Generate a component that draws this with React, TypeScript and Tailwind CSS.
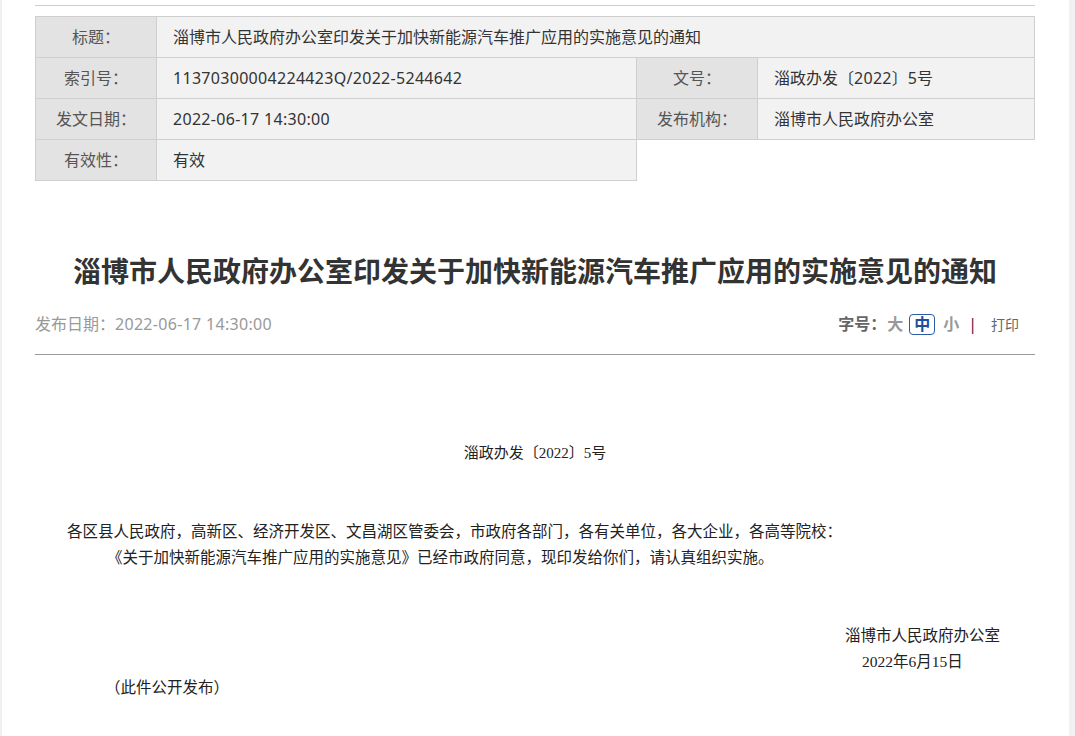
import React from 'react';

/* 淄博市政府信息公开 — 文件详情页 */

const SANS = '"Noto Sans", "Noto Sans CJK SC", sans-serif';
const SERIF = '"Liberation Serif", "Noto Sans CJK SC", serif';

const labelCls = 'h-[41px] border border-[#cfcfcf] bg-[#e3e3e3] text-center text-[16px] text-[#555] font-normal p-0';
const valueCls = 'h-[41px] border border-[#cfcfcf] bg-[#f2f2f2] text-left text-[16px] text-[#333] pl-4 p-0';

// digits in the original render a touch wider than Noto Sans
const Num = ({ children }: { children: React.ReactNode }) => (
  <span className="tracking-[0.3px]">{children}</span>
);

function MetaTable() {
  return (
    <table className="w-[1000px] table-fixed border-collapse">
      <colgroup>
        <col className="w-[121px]" />
        <col className="w-[480px]" />
        <col className="w-[121px]" />
        <col />
      </colgroup>
      <tbody>
        <tr>
          <th className={labelCls}>标题：</th>
          <td className={valueCls} colSpan={3}>淄博市人民政府办公室印发关于加快新能源汽车推广应用的实施意见的通知</td>
        </tr>
        <tr>
          <th className={labelCls}>索引号：</th>
          <td className={valueCls}><Num>11370300004224423Q/2022-5244642</Num></td>
          <th className={labelCls}>文号：</th>
          <td className={valueCls}>淄政办发〔<Num>2022</Num>〕5号</td>
        </tr>
        <tr>
          <th className={labelCls}>发文日期：</th>
          <td className={valueCls}><Num>2022-06-17 14:30:00</Num></td>
          <th className={labelCls}>发布机构：</th>
          <td className={valueCls}>淄博市人民政府办公室</td>
        </tr>
        <tr>
          <th className={labelCls}>有效性：</th>
          <td className={valueCls}>有效</td>
          <td colSpan={2} className="border-0 p-0" />
        </tr>
      </tbody>
    </table>
  );
}

function FontSizeBar() {
  return (
    <div className="flex items-center text-[16px] font-bold">
      <span className="text-[#666]">字号：</span>
      <span className="ml-[1px] text-[#999]">大</span>
      <span className="ml-[6px] flex h-[21px] w-[26px] items-center justify-center rounded-[4px] border border-[#2b5aa8] text-[#1d4f9c]">中</span>
      <span className="ml-[8px] text-[#999]">小</span>
      <span className="ml-[9px] text-[#5e1742] font-normal">|</span>
      <span className="ml-[14px] mr-[16px] text-[14px] font-normal text-[#666]">打印</span>
    </div>
  );
}

export default function App() {
  return (
    <div className="flex min-h-[736px] w-full bg-white" style={{ fontFamily: SANS }}>
      <div className="w-[2px] shrink-0 bg-[#f0f0f0]" />
      <main className="flex-1">
        <div className="ml-[33px] w-[1000px]">
          <div className="mt-[5px] border-t border-[#cccccc]" />
          <div className="mt-[10px]">
            <MetaTable />
          </div>

          <h1 className="mt-[70px] text-center text-[28px] font-bold leading-[40px] text-[#333]">
            淄博市人民政府办公室印发关于加快新能源汽车推广应用的实施意见的通知
          </h1>

          <div className="mt-[18px] flex h-[30px] items-center justify-between">
            <span className="text-[16px] text-[#999]">发布日期：<Num>2022-06-17 14:30:00</Num></span>
            <FontSizeBar />
          </div>
          <div className="mt-[15px] border-t border-[#9a9a9a]" />

          <div className="leading-[26px] text-[#222]" style={{ fontFamily: SERIF }}>
            <p className="mt-[85px] text-center text-[15px]">淄政办发〔2022〕5号</p>
            <div className="mt-[53px] text-[15.5px]">
              <p className="pl-[32px]">各区县人民政府，高新区、经济开发区、文昌湖区管委会，市政府各部门，各有关单位，各大企业，各高等院校：</p>
              <p className="pl-[72px]">《关于加快新能源汽车推广应用的实施意见》已经市政府同意，现印发给你们，请认真组织实施。</p>
            </div>
            <div className="mt-[52px] text-[15.5px]">
              <p className="pl-[810px]">淄博市人民政府办公室</p>
              <p className="pl-[827px]">2022年6月15日</p>
              <p className="pl-[70px]">（此件公开发布）</p>
            </div>
          </div>
        </div>
      </main>
      <div className="w-[6px] shrink-0 bg-[#f1f1f1]" />
    </div>
  );
}
